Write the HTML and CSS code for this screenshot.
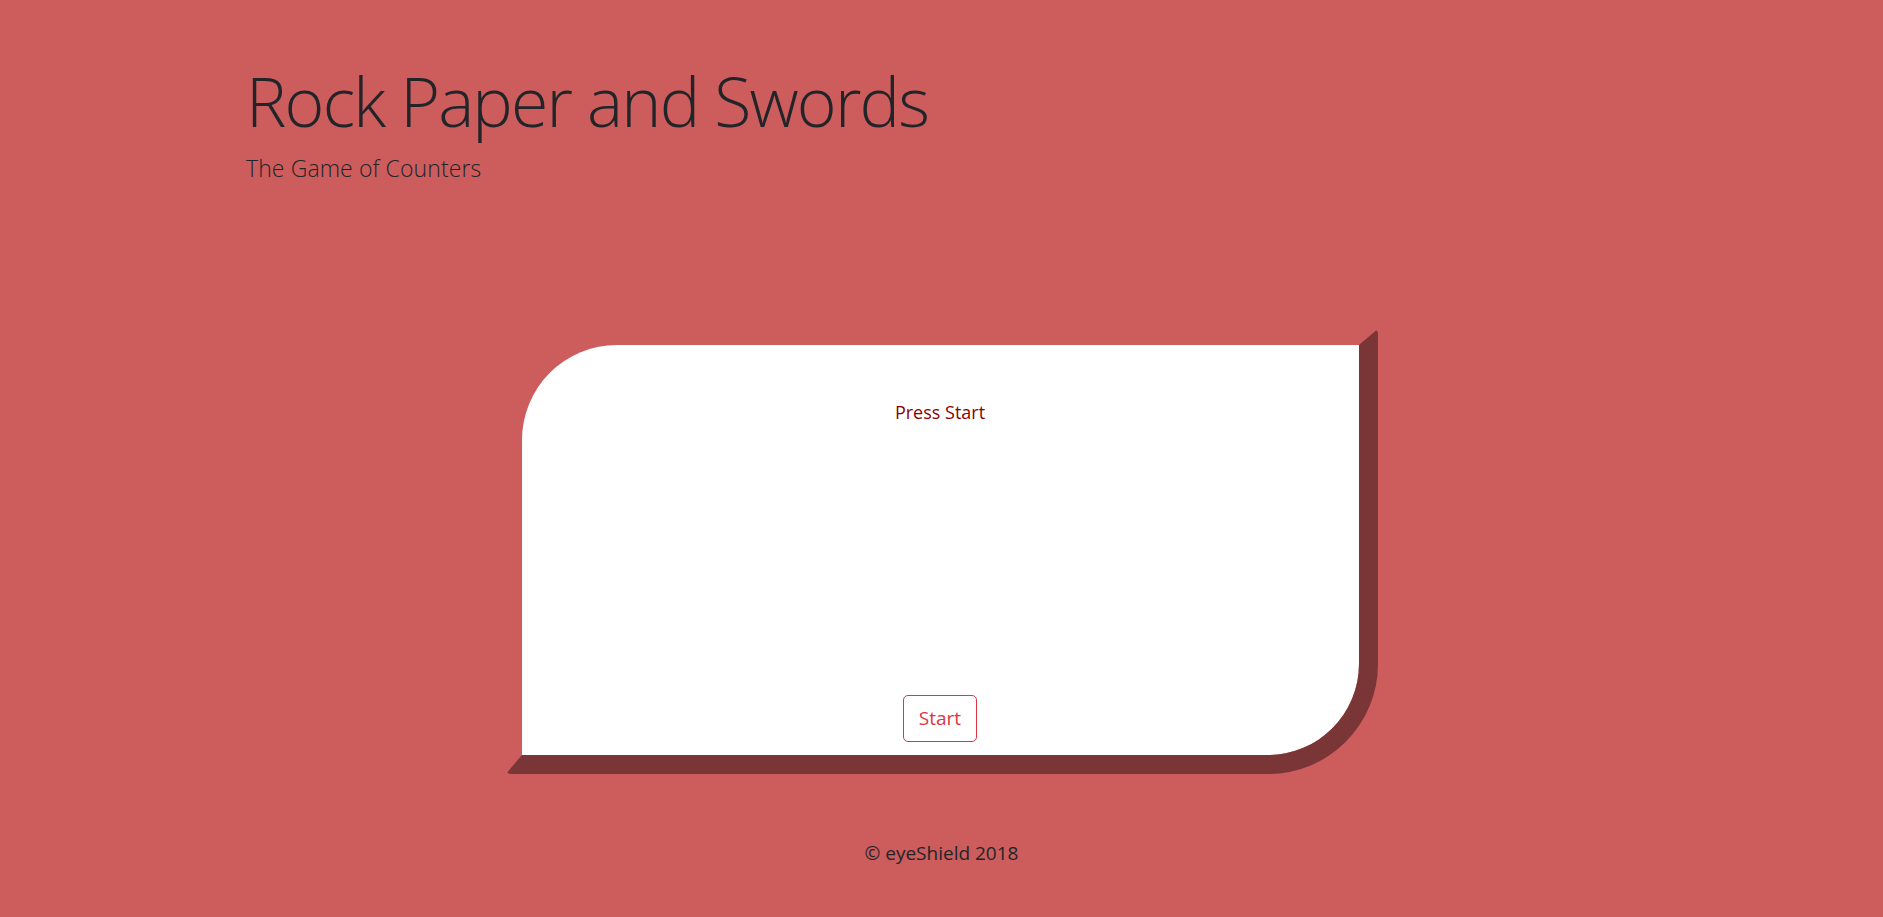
FILE: index.html
```html
<!DOCTYPE html>
<html lang="en">
<head>
<meta charset="utf-8">
<title>Rock Paper and Swords</title>
<link rel="stylesheet" href="styles.css">
</head>
<body>
<header class="hero">
  <div class="hero-inner">
    <h1 class="hero-title">Rock Paper and Swords</h1>
    <p class="hero-lead">The Game of Counters</p>
  </div>
</header>
<main class="stage">
  <section class="board">
    <p class="board-status">Press Start</p>
    <button class="btn-start" type="button">Start</button>
  </section>
</main>
<footer class="site-footer">© eyeShield 2018</footer>
</body>
</html>
```
FILE: styles.css
```css
html, body {
  margin: 0;
  padding: 0;
}
body {
  background: #cd5c5c;
  color: #212529;
  font-family: "Open Sans", "Noto Sans", sans-serif;
  min-height: 917px;
}
.hero {
  padding-top: 60px;
}
.hero-inner {
  max-width: 1391px;
  margin: 0 auto;
}
.hero-title {
  margin: 0;
  font-size: 68px;
  font-weight: 300;
  line-height: 1.2;
  letter-spacing: -1.8px;
  color: #212529;
}
.hero-lead {
  margin: 9px 0 0;
  font-size: 23px;
  font-weight: 300;
  line-height: 1.5;
  letter-spacing: 0.1px;
}
.stage {
  display: flex;
  justify-content: center;
  padding-top: 144px;
}
.board {
  box-sizing: border-box;
  width: 872px;
  height: 445px;
  border-style: solid;
  border-width: 16px 19px 19px 16px;
  border-color: transparent #7a3636 #7a3636 transparent;
  border-radius: 111px 5px 110px 5px;
  background: #fff;
  background-clip: padding-box;
  display: flex;
  flex-direction: column;
  align-items: center;
  justify-content: space-between;
  padding: 54px 0 13px;
}
.board-status {
  margin: 0;
  font-size: 18px;
  line-height: 1.5;
  color: #8b0000;
}
.btn-start {
  font-family: inherit;
  font-size: 19px;
  line-height: 1.55;
  padding: 8px 15px;
  color: #dc3545;
  background: transparent;
  border: 1px solid #dc3545;
  border-radius: 5px;
  cursor: pointer;
}
.site-footer {
  text-align: center;
  font-size: 19px;
  line-height: 1.5;
  padding-top: 65px;
}
```
